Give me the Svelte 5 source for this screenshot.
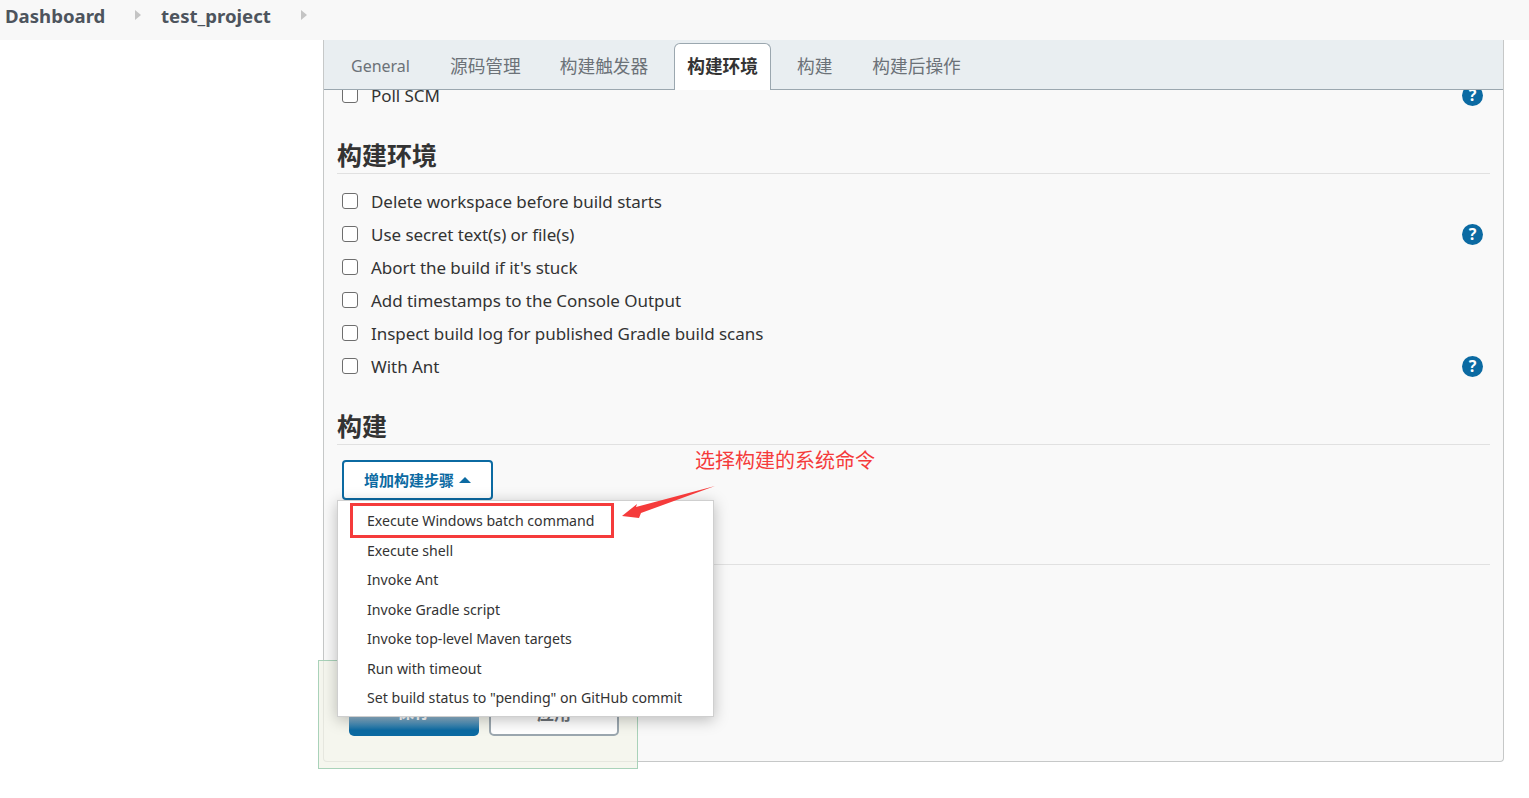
<script>
  const tabs = [
    { label: 'General', latin: true }, { label: '源码管理' }, { label: '构建触发器' },
    { label: '构建环境', active: true }, { label: '构建' }, { label: '构建后操作' }
  ];
  const envRows = [
    { label: 'Delete workspace before build starts' },
    { label: 'Use secret text(s) or file(s)', help: true },
    { label: "Abort the build if it's stuck" },
    { label: 'Add timestamps to the Console Output' },
    { label: 'Inspect build log for published Gradle build scans' },
    { label: 'With Ant', help: true }
  ];
  const menu = [
    'Execute Windows batch command', 'Execute shell', 'Invoke Ant', 'Invoke Gradle script',
    'Invoke top-level Maven targets', 'Run with timeout', 'Set build status to "pending" on GitHub commit'
  ];
</script>

<header class="crumbs">
  <a class="crumb first">Dashboard</a>
  <span class="sep"></span>
  <a class="crumb second">test_project</a>
  <span class="sep"></span>
</header>

<main class="page">
  <section class="panel">
    <nav class="tabs">
      {#each tabs as t}
        <span class="tab" class:active={t.active} class:latin={t.latin}>{t.label}</span>
      {/each}
    </nav>
    <div class="body">
      <div class="row">
        <input type="checkbox" /><span class="label">Poll SCM</span><span class="help">?</span>
      </div>
      <h2 class="title">构建环境</h2>
      {#each envRows as r}
        <div class="row">
          <input type="checkbox" /><span class="label">{r.label}</span>
          {#if r.help}<span class="help">?</span>{/if}
        </div>
      {/each}
      <h2 class="title">构建</h2>
      <button class="add"><span class="addtext">增加构建步骤</span><span class="caret"></span></button>
      <hr class="rule" />
    </div>

    <div class="savebar">
      <button class="save">保存</button>
      <button class="apply">应用</button>
    </div>

    <ul class="menu">
      {#each menu as m}<li>{m}</li>{/each}
    </ul>
    <div class="mark"></div>
    <div class="note">选择构建的系统命令</div>
    <svg class="arrow" width="100" height="40" viewBox="0 0 100 40">
      <polygon points="7,30 22,18 21,21 100,0 26,27 24,32" fill="#f53b3b" />
    </svg>
  </section>
</main>

<style>
  :global(body) {
    margin: 0;
    background: #fff;
    font-family: "Noto Sans", "Noto Sans CJK SC", sans-serif;
    color: #333;
  }
  .crumbs {
    height: 40px;
    background: #f8f8f8;
    display: flex;
    align-items: center;
    padding-left: 5px;
  }
  .crumb {
    font-size: 18.6px;
    font-weight: 700;
    color: #4d545d;
    line-height: 32px;
    padding-bottom: 8px;
  }
  .first { width: 130px; }
  .second { width: 140px; }
  .sep {
    width: 0;
    height: 0;
    border-left: 6px solid #c4c4c4;
    border-top: 5px solid transparent;
    border-bottom: 5px solid transparent;
    margin: 0 20px 0 0;
    transform: translateY(-5px);
  }
  .page {
    padding: 0 0 36px 323px;
    width: 1181px;
  }
  .panel {
    position: relative;
    box-sizing: border-box;
    width: 1181px;
    height: 722px;
    border: 1px solid #c6c8c8;
    border-top: 0;
    border-radius: 0 0 4px 4px;
    background: #f9f9f9;
  }
  .tabs {
    position: relative;
    z-index: 2;
    box-sizing: border-box;
    height: 50px;
    background: #e9eef1;
    border-bottom: 1px solid #9ba7af;
    display: flex;
    align-items: flex-end;
    gap: 11px;
    padding-left: 14px;
  }
  .tab {
    box-sizing: border-box;
    height: 47px;
    padding: 0 13px;
    margin-bottom: -1px;
    font-size: 17.7px;
    line-height: 44px;
    color: #6c7278;
    border: 1px solid transparent;
    border-bottom: 0;
  }
  .tab:last-child {
    margin-left: 1px;
  }
  .tab.latin {
    font-size: 16px;
    margin-right: 1px;
    padding-left: 12px;
  }
  .tab.active {
    background: #fff;
    color: #333;
    font-weight: 700;
    border-color: #9ba7af;
    border-radius: 6px 6px 0 0;
    padding: 0 12px;
    margin: 0 1px -1px 1px;
  }
  .body {
    margin-top: -11px;
    padding: 0 13px;
  }
  .row {
    height: 33px;
    display: flex;
    align-items: center;
    padding-left: 5px;
  }
  input[type="checkbox"] {
    appearance: none;
    box-sizing: border-box;
    width: 16px;
    height: 16px;
    margin: 0 13px 2px 0;
    background: #fff;
    border: 1px solid #6e6e6e;
    border-radius: 3px;
    flex: none;
  }
  .label {
    font-size: 17px;
    letter-spacing: -0.05px;
    color: #333;
    line-height: 33px;
  }
  .help {
    margin-left: auto;
    margin-right: 7px;
    width: 21px;
    height: 21px;
    border-radius: 50%;
    background: #0b6aa2;
    color: #fff;
    font-size: 16px;
    font-weight: 700;
    line-height: 21px;
    text-align: center;
  }
  .title {
    margin: 0 0 11px;
    box-sizing: border-box;
    height: 62px;
    padding-top: 24px;
    border-bottom: 1px solid #e1e1e1;
    font-size: 25px;
    line-height: 38px;
    font-weight: 700;
    color: #333;
  }
  .title:last-of-type {
    margin-bottom: 15px;
  }
  .add {
    display: flex;
    align-items: center;
    justify-content: center;
    gap: 4px;
    margin-left: 5px;
    box-sizing: border-box;
    width: 151px;
    height: 40px;
    padding: 0;
    border: 2px solid #0b6aa2;
    border-radius: 4px;
    background: #fff;
    color: #0b6aa2;
    font: 700 15px "Noto Sans CJK SC", sans-serif;
  }
  .addtext {
    margin-top: -2px;
  }
  .caret {
    width: 0;
    height: 0;
    border-left: 6px solid transparent;
    border-right: 6px solid transparent;
    border-bottom: 6px solid #0b6aa2;
    margin-left: 1px;
  }
  .rule {
    margin: 64px 0 0;
    border: 0;
    border-top: 1px solid #e1e1e1;
  }
  .savebar {
    position: absolute;
    z-index: 3;
    left: -6px;
    top: 620px;
    box-sizing: border-box;
    width: 320px;
    height: 109px;
    background: #f5f6ee;
    border: 1px solid #a9d2b9;
    padding: 37px 0 0 30px;
    display: flex;
    gap: 10px;
  }
  .savebar::after {
    content: "";
    position: absolute;
    left: 4px;
    right: 0;
    top: 0;
    bottom: 6px;
    border-left: 1px solid #e6e7df;
    border-bottom: 1px solid #e6e7df;
    border-radius: 0 0 0 4px;
  }
  .savebar button {
    box-sizing: border-box;
    width: 130px;
    height: 38px;
    border-radius: 5px;
    font: 700 17px "Noto Sans CJK SC", sans-serif;
    padding: 0 0 13px;
  }
  .save {
    background: linear-gradient(#8fb4cc 50%, #0b6aa2 85%);
    color: #fff;
    border: 0;
  }
  .apply {
    background: #fff;
    color: #6c7278;
    border: 2px solid #9ba7af;
  }
  .menu {
    position: absolute;
    z-index: 4;
    left: 13px;
    top: 460px;
    box-sizing: border-box;
    width: 377px;
    height: 217px;
    margin: 0;
    padding: 5px 0 0 29px;
    list-style: none;
    background: #fff;
    border: 1px solid #cfcfcf;
    box-shadow: 0 3px 14px rgba(0, 0, 0, 0.25);
  }
  .menu li {
    height: 29.5px;
    font-size: 14.15px;
    line-height: 29.5px;
    color: #333;
    white-space: nowrap;
  }
  .mark {
    position: absolute;
    z-index: 5;
    left: 26px;
    top: 463px;
    box-sizing: border-box;
    width: 264px;
    height: 35px;
    border: 3px solid #f53b3b;
  }
  .note {
    position: absolute;
    z-index: 5;
    left: 371px;
    top: 406px;
    font-size: 20px;
    line-height: 30px;
    color: #f53b3b;
    white-space: nowrap;
  }
  .arrow {
    position: absolute;
    z-index: 5;
    left: 291px;
    top: 446px;
  }
</style>
